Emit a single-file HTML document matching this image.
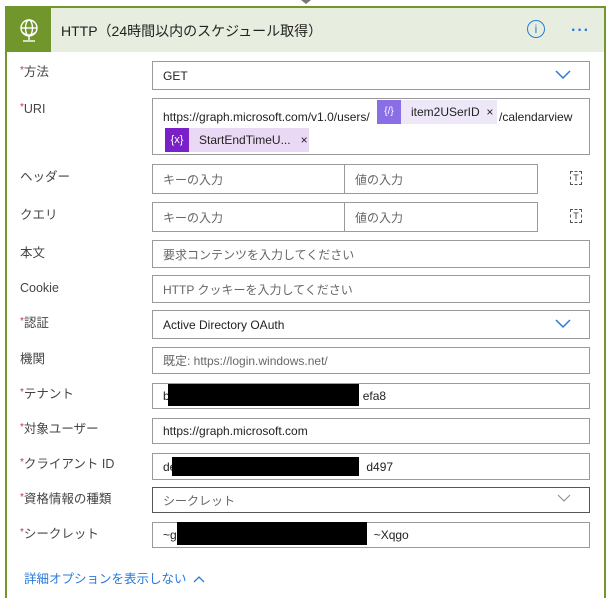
<html><head><style>
body{margin:0;width:611px;height:588px;background:#fff;position:relative;overflow:hidden;font-family:"Liberation Sans","Noto Sans CJK JP",sans-serif;}
.a{position:absolute;}
.card{left:5px;top:6px;width:597px;height:590px;border:2px solid #71962b;border-bottom:none;}
.hdr{left:7px;top:8px;width:597px;height:44px;background:#e8eedf;}
.gb{left:7px;top:8px;width:44px;height:44px;background:#71962b;}
.lbl{font-size:12.5px;color:#444;left:20px;line-height:16px;margin-top:-2px;}
.lbl .s{color:#c4314b;font-size:10px;position:relative;top:-3px;line-height:0;}
.box{border:1px solid #9a9a9a;box-sizing:border-box;font-size:12px;color:#222;padding-left:10px;display:flex;align-items:center;background:#fff;}
.ph{color:#666;}
.blk{background:#000;}
.chev{position:absolute;right:18px;top:50%;margin-top:-6px;}
</style></head><body>
<div class="a" style="left:301px;top:0;width:10px;height:4px;background:#777;clip-path:polygon(0 0,100% 0,50% 100%)"></div>
<div class="a card"></div>
<div class="a hdr"></div>
<div class="a gb"><svg width="44" height="44" viewBox="0 0 44 44"><g fill="none" stroke="#fff" stroke-width="1.4"><circle cx="22" cy="20" r="8"/><ellipse cx="22" cy="20" rx="3.5" ry="8"/><line x1="14" y1="20" x2="30" y2="20"/><path d="M15 24 Q22 30 29 24"/><line x1="22" y1="28" x2="22" y2="32"/><line x1="16" y1="33" x2="28" y2="33"/></g></svg></div>
<div class="a" style="left:61px;top:21px;font-size:14px;color:#222;">HTTP（24時間以内のスケジュール取得）</div>
<div class="a" style="left:527px;top:20px;width:18px;height:18px;border:1.5px solid #2a7ad8;border-radius:50%;box-sizing:border-box;color:#2a7ad8;font-size:12px;text-align:center;line-height:16px;">i</div>
<div class="a" style="left:571px;top:22px;color:#2a7ad8;font-size:16px;letter-spacing:1px;font-weight:bold;">···</div>

<div class="a lbl" style="top:66px"><span class="s">*</span>方法</div>
<div class="a box" style="left:152px;top:61px;width:438px;height:29px;">GET<svg class="chev" width="16" height="10"><path d="M1 1L8 8L15 1" fill="none" stroke="#2a7ad8" stroke-width="1.5"/></svg></div>

<div class="a lbl" style="top:103px"><span class="s">*</span>URI</div>
<div class="a box" style="left:152px;top:98px;width:438px;height:57px;"></div>
<div class="a" style="left:163px;top:110px;font-size:12px;color:#222;">https://graph.microsoft.com/v1.0/users/</div>
<div class="a" style="left:377px;top:100px;width:24px;height:24px;background:#8a6ee6;color:#fff;font-size:10px;text-align:center;line-height:24px;">{/}</div>
<div class="a" style="left:401px;top:100px;width:96px;height:24px;background:#ede7f8;font-size:12px;line-height:24px;color:#222;padding-left:10px;box-sizing:border-box;">item2USerID&nbsp; ×</div>
<div class="a" style="left:499px;top:110px;font-size:12px;color:#222;">/calendarview</div>
<div class="a" style="left:165px;top:128px;width:24px;height:24px;background:#7a20c8;color:#fff;font-size:11px;text-align:center;line-height:24px;">{x}</div>
<div class="a" style="left:189px;top:128px;width:120px;height:24px;background:#ead9f4;font-size:12px;line-height:24px;color:#222;padding-left:10px;box-sizing:border-box;">StartEndTimeU...&nbsp;&nbsp; ×</div>

<div class="a lbl" style="top:171px">ヘッダー</div>
<div class="a box ph" style="left:152px;top:164px;width:193px;height:30px;">キーの入力</div>
<div class="a box ph" style="left:344px;top:164px;width:194px;height:30px;">値の入力</div>
<div class="a" style="left:570px;top:171px;width:12px;height:14px;border:1px dashed #555;box-sizing:border-box;font-size:9px;text-align:center;line-height:12px;color:#333;">T</div>
<div class="a lbl" style="top:209px">クエリ</div>
<div class="a box ph" style="left:152px;top:202px;width:193px;height:30px;">キーの入力</div>
<div class="a box ph" style="left:344px;top:202px;width:194px;height:30px;">値の入力</div>
<div class="a" style="left:570px;top:209px;width:12px;height:14px;border:1px dashed #555;box-sizing:border-box;font-size:9px;text-align:center;line-height:12px;color:#333;">T</div>

<div class="a lbl" style="top:247px">本文</div>
<div class="a box ph" style="left:152px;top:240px;width:438px;height:28px;">要求コンテンツを入力してください</div>
<div class="a lbl" style="top:282px">Cookie</div>
<div class="a box ph" style="left:152px;top:275px;width:438px;height:28px;">HTTP クッキーを入力してください</div>
<div class="a lbl" style="top:317px"><span class="s">*</span>認証</div>
<div class="a box" style="left:152px;top:310px;width:438px;height:29px;">Active Directory OAuth<svg class="chev" width="16" height="10"><path d="M1 1L8 8L15 1" fill="none" stroke="#2a7ad8" stroke-width="1.5"/></svg></div>
<div class="a lbl" style="top:353px">機関</div>
<div class="a box ph" style="left:152px;top:347px;width:438px;height:27px;">既定: https://login.windows.net/</div>
<div class="a lbl" style="top:388px"><span class="s">*</span>テナント</div>
<div class="a box" style="left:152px;top:383px;width:438px;height:26px;">b<span style="margin-left:193px">efa8</span></div>
<div class="a blk" style="left:168px;top:384px;width:191px;height:22px;"></div>
<div class="a lbl" style="top:423px"><span class="s">*</span>対象ユーザー</div>
<div class="a box" style="left:152px;top:418px;width:438px;height:26px;">https://graph.microsoft.com</div>
<div class="a lbl" style="top:458px"><span class="s">*</span>クライアント ID</div>
<div class="a box" style="left:152px;top:453px;width:438px;height:27px;">de<span style="margin-left:190px">d497</span></div>
<div class="a blk" style="left:172px;top:457px;width:187px;height:19px;"></div>
<div class="a lbl" style="top:493px"><span class="s">*</span>資格情報の種類</div>
<div class="a box ph" style="left:152px;top:487px;width:438px;height:26px;border-color:#555;">シークレット<svg class="chev" width="14" height="8"><path d="M1 1L7 7L13 1" fill="none" stroke="#888" stroke-width="1"/></svg></div>
<div class="a lbl" style="top:528px"><span class="s">*</span>シークレット</div>
<div class="a box" style="left:152px;top:522px;width:438px;height:26px;">~g<span style="margin-left:197px">~Xqgo</span></div>
<div class="a blk" style="left:177px;top:522px;width:190px;height:23px;"></div>
<div class="a" style="left:24px;top:568px;font-size:12.5px;color:#2a7ad8;">詳細オプションを表示しない &nbsp;<svg width="12" height="8"><path d="M1 7L6 2L11 7" fill="none" stroke="#2a7ad8" stroke-width="1.3"/></svg></div>
</body></html>
